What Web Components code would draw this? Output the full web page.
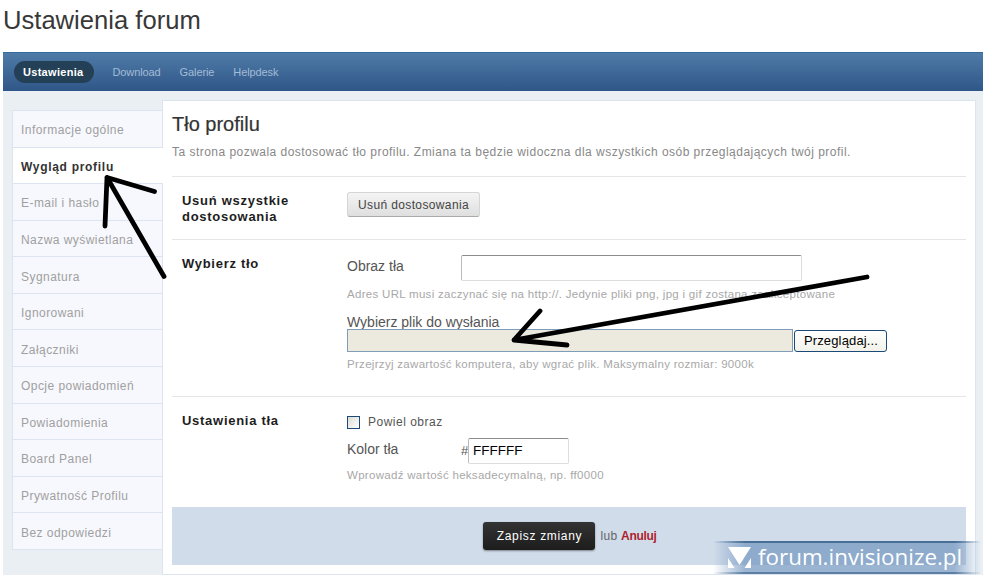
<!DOCTYPE html>
<html lang="pl"><head><meta charset="utf-8"><title>Ustawienia forum</title>
<style>
html,body{margin:0;padding:0;background:#fff}
body{font-family:"Liberation Sans",Arial,sans-serif;width:984px;height:575px;overflow:hidden;position:relative}
</style></head><body>
<settings-app></settings-app>
<scribble-arrows></scribble-arrows>
<forum-watermark></forum-watermark>
<script>
function def(name, css, html){
  customElements.define(name, class extends HTMLElement{
    constructor(){super();const r=this.attachShadow({mode:'open'});r.innerHTML='<style>'+css+'</style>'+html;}
  });
}
def('page-title',`:host{display:block;height:52px;box-sizing:border-box;padding:5px 0 0 3px;font-size:25.6px;line-height:30px;color:#383838}`,`<slot></slot>`);
def('nav-tab',`:host{display:block;font-size:11px;line-height:22px;padding:0 9px;color:#a3bcd6;letter-spacing:-.1px}
:host([active]){background:#234057;color:#fff;font-weight:bold;border-radius:11px;letter-spacing:.3px;margin-right:8px;padding-right:11px}`,`<slot></slot>`);
def('nav-bar',`:host{display:flex;align-items:flex-start;height:39px;box-sizing:border-box;padding:8px 0 0 11px;gap:1px;background:linear-gradient(#4f7ba7,#2f5688);border-top:1px solid #356a9f}`,`<slot></slot>`);
def('menu-item',`:host{display:flex;align-items:center;box-sizing:border-box;padding:3px 0 0 8px;font-size:12px;letter-spacing:.45px;color:#a0a0a0;background:#f7f8fd;border-bottom:1px solid #dbe4ef;border-left:1px solid #dbe4ef}
:host([active]){background:#fff;color:#333;font-weight:bold;letter-spacing:.7px;position:relative;z-index:2;margin-right:-1px}`,`<slot></slot>`);
def('side-menu',`:host{display:grid;grid-template-rows:repeat(12,36.58px);width:150px;align-self:flex-start;border-top:1px solid #dbe4ef;height:439px;margin-top:10px}`,`<slot></slot>`);
def('form-row',`:host{display:flex;box-sizing:border-box;border-bottom:1px solid #e6e6e6;padding:0 0 0 10px}
:host([last]){border-bottom:0}
.l{width:165px;flex:none;box-sizing:border-box;padding-top:1px;font-size:13px;line-height:16px;font-weight:bold;color:#1d1d1d;letter-spacing:.72px}
.c{flex:1}`,`<div class="l"><slot name="label"></slot></div><div class="c"><slot></slot></div>`);
def('hint-text',`:host{display:block;font-size:11.5px;line-height:14px;color:#a8a8a8;letter-spacing:.3px;white-space:nowrap}`,`<slot></slot>`);
def('grey-button',`:host{display:inline-block;box-sizing:border-box;height:25px;padding:0 10px;font-size:12px;line-height:24px;letter-spacing:.37px;color:#444;background:linear-gradient(#f4f4f4,#dfdfdf);border:1px solid #d5d5d5;border-bottom:1px solid #aaa;border-radius:3px}`,`<slot></slot>`);
def('text-box',`:host{display:block;box-sizing:border-box;height:26px;border:1px solid #ddd;border-top-color:#8c8c8c;border-left-color:#bbb;border-radius:2px;background:#fff;font-size:13.5px;line-height:24px;padding-left:4px;color:#000}`,`<slot></slot>`);
def('file-picker',`:host{display:flex;align-items:flex-start}
.f{box-sizing:border-box;width:446px;height:23px;background:#ece9df;border:1px solid #7f9db9}
.b{box-sizing:border-box;width:93px;height:22px;margin:1px 0 0 1px;padding-left:1px;border:1px solid #1c4a78;border-radius:3px;background:linear-gradient(#fff,#f2f2ea);font-size:13px;line-height:20px;text-align:center;color:#000;letter-spacing:.15px}`,`<div class="f"></div><div class="b">Przeglądaj...</div>`);
def('check-option',`:host{display:flex;align-items:center;gap:8px;height:14px;font-size:12px;letter-spacing:.5px;color:#555}
i{display:block;box-sizing:border-box;width:13px;height:13px;border:1px solid #1c4a78;background:linear-gradient(135deg,#dcdcd6,#fff)}`,`<i></i><slot></slot>`);
def('field-line',`:host{display:flex;font-size:14px;color:#555}
.n{flex:none;width:114px}`,`<div class="n"><slot name="name"></slot></div><slot></slot>`);
def('save-bar',`:host{display:flex;align-items:center;justify-content:center;height:58px;background:#d1dcea;font-size:12px;color:#666;gap:5px;padding-left:2px;box-sizing:border-box;letter-spacing:.3px}
.z{box-sizing:border-box;width:112px;height:28px;line-height:29px;text-align:center;background:linear-gradient(#333,#1d1d1d);color:#fff;border-radius:3px;box-shadow:0 1px 2px rgba(0,0,0,.4);letter-spacing:.68px}
b{color:#ad1f2e;letter-spacing:-.3px}`,`<div class="z">Zapisz zmiany</div><span>lub <b>Anuluj</b></span>`);
def('content-panel',`:host{display:block;box-sizing:border-box;width:814px;height:475px;background:#fff;border:1px solid #dbe4ef;padding:0 9px;color:#333}
h2{margin:0;padding-top:11px;font-size:20px;line-height:24px;font-weight:normal;color:#333;-webkit-text-stroke:.2px #333}
p{margin:0;padding-top:8px;height:40px;box-sizing:border-box;font-size:12px;line-height:16px;letter-spacing:.47px;color:#888}`,`<h2>Tło profilu</h2><p>Ta strona pozwala dostosować tło profilu. Zmiana ta będzie widoczna dla wszystkich osób przeglądających twój profil.</p><slot></slot>`);
def('settings-app',`:host{display:block}
.n{margin:0 1px 0 3px}
.m{display:flex;align-items:flex-start;height:484px;margin:0 1px 0 3px;background:#e9eff3;padding:9px 0 0 9px;box-sizing:border-box}
.r0{height:15px;border-top:1px solid #e6e6e6}
.plab{font-size:14px;line-height:16px;color:#555;margin-top:13px;height:15px}
.hash{width:7px;line-height:26px;font-size:13px}`,`<page-title>Ustawienia forum</page-title>
<div class="n"><nav-bar>
<nav-tab active>Ustawienia</nav-tab><nav-tab>Download</nav-tab><nav-tab>Galerie</nav-tab><nav-tab>Helpdesk</nav-tab>
</nav-bar></div>
<div class="m">
<side-menu>
<menu-item>Informacje ogólne</menu-item>
<menu-item active>Wygląd profilu</menu-item>
<menu-item>E-mail i hasło</menu-item>
<menu-item>Nazwa wyświetlana</menu-item>
<menu-item>Sygnatura</menu-item>
<menu-item>Ignorowani</menu-item>
<menu-item>Załączniki</menu-item>
<menu-item>Opcje powiadomień</menu-item>
<menu-item>Powiadomienia</menu-item>
<menu-item>Board Panel</menu-item>
<menu-item>Prywatność Profilu</menu-item>
<menu-item>Bez odpowiedzi</menu-item>
</side-menu>
<content-panel>
<div class="r0"></div>
<form-row style="height:48px"><span slot="label">Usuń wszystkie dostosowania</span><grey-button>Usuń dostosowania</grey-button></form-row>
<form-row style="height:157px;padding-top:15px"><span slot="label">Wybierz tło</span>
  <div>
    <field-line style="height:26px;line-height:22px"><span slot="name">Obraz tła</span><text-box style="width:341px"></text-box></field-line>
    <hint-text style="margin-top:6px">Adres URL musi zaczynać się na http://. Jedynie pliki png, jpg i gif zostaną zaakceptowane</hint-text>
    <div class="plab">Wybierz plik do wysłania</div>
    <file-picker></file-picker>
    <hint-text style="margin-top:5px">Przejrzyj zawartość komputera, aby wgrać plik. Maksymalny rozmiar: 9000k</hint-text>
  </div>
</form-row>
<form-row last style="height:110px;padding-top:15px"><span slot="label">Ustawienia tła</span>
  <div>
    <check-option style="margin-top:3px">Powiel obraz</check-option>
    <field-line style="margin-top:9px;height:26px;line-height:23px"><span slot="name">Kolor tła</span><span class="hash">#</span><text-box style="width:101px">FFFFFF</text-box></field-line>
    <hint-text style="margin-top:4px">Wprowadź wartość heksadecymalną, np. ff0000</hint-text>
  </div>
</form-row>
<save-bar></save-bar>
</content-panel>
</div>`);
def('scribble-arrows',`:host{position:absolute;left:0;top:0;width:984px;height:575px;pointer-events:none;z-index:5;display:block}
svg{display:block}`,`<svg width="984" height="575" viewBox="0 0 984 575" fill="none" stroke="#000" stroke-linecap="round" stroke-linejoin="round">
<path d="M154.500 191.500L107 177.500L105 226M107 177.500L164 276.500" stroke-width="4.800"/>
<path d="M867 277L514 340L540 311M514 340L567 345" stroke-width="4.800"/></svg>`);
def('forum-watermark',`:host{position:absolute;left:713px;top:541px;width:268px;height:33px;z-index:6;display:flex;align-items:center;box-sizing:border-box;padding-left:15px;gap:7px;color:#fff;font-family:"Open Sans",sans-serif;font-size:22.4px;
background:linear-gradient(90deg,rgba(110,150,190,0),rgba(120,155,195,.75) 12%,rgba(120,155,195,.75) 90%,rgba(120,155,195,0));}
:host::before{content:"";position:absolute;left:0;right:0;top:0;height:2px;background:linear-gradient(90deg,rgba(50,90,130,0),rgba(50,90,130,.75) 12%,rgba(50,90,130,.75) 90%,rgba(50,90,130,0))}
:host::after{content:"";position:absolute;left:0;right:0;bottom:0;height:2px;background:linear-gradient(90deg,rgba(50,90,130,0),rgba(50,90,130,.6) 12%,rgba(50,90,130,.6) 90%,rgba(50,90,130,0))}
svg{flex:none;display:block}
span{white-space:nowrap;line-height:33px;position:relative;top:-1px}`,`<svg width="23" height="21" viewBox="0 0 23 21"><path fill="#fff" d="M0 0H23L11.500 18ZM0 11L6.500 21H0ZM23 11V21H16.500Z"/></svg><span>forum.invisionize.pl</span>`);
</script>
</body></html>
